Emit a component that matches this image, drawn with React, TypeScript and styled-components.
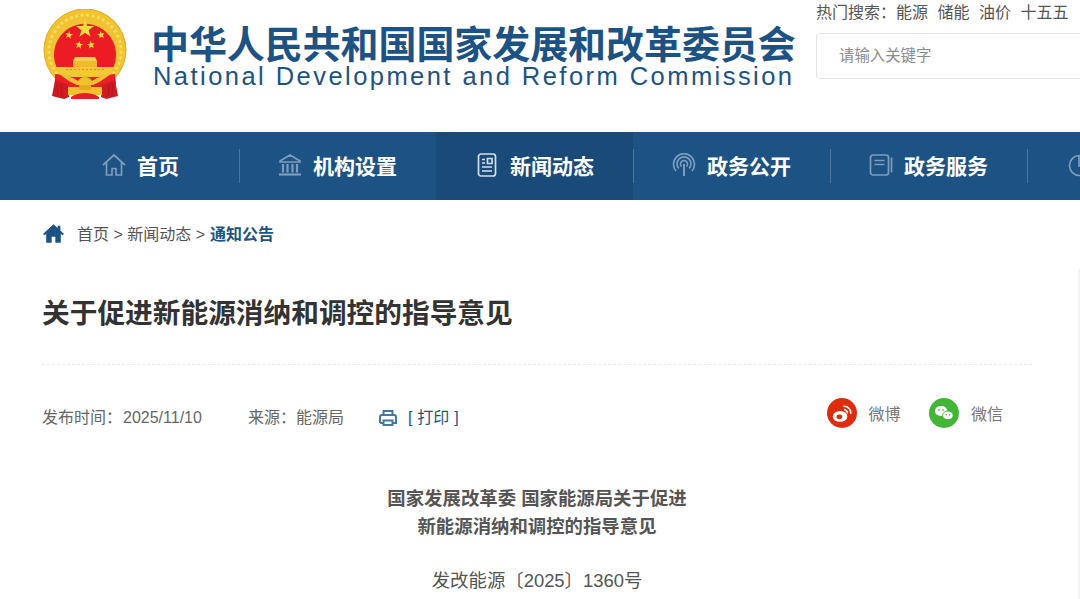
import { FC } from 'react';
import styled, { createGlobalStyle } from 'styled-components';

const GlobalStyle = createGlobalStyle`
    html, body {
        margin: 0;
        padding: 0;
        background: #fff;
        overflow: hidden;
    }
    body {
        font-family: "Liberation Sans", "Noto Sans CJK SC", sans-serif;
    }
`;

const Page = styled.div`
    position: relative;
    width: 1080px;
    height: 599px;
    overflow: hidden;
    color: #555;
`;

const Header = styled.header`
    display: flex;
    height: 132px;
    padding-left: 42px;
`;

const Brand = styled.div`
    display: flex;
    width: 774px;
    flex-shrink: 0;
    padding-top: 9px;
`;

const Emblem = styled.svg`
    width: 87px;
    height: 91px;
    flex-shrink: 0;
`;

const BrandText = styled.div`
    margin-left: 22px;
    padding-top: 16px;
    color: #1d5384;
    white-space: nowrap;
`;

const BrandCn = styled.div`
    font-size: 38px;
    line-height: 40px;
    font-weight: 700;
    letter-spacing: -0.08px;
`;

const BrandEn = styled.div`
    font-size: 25.5px;
    line-height: 22px;
    letter-spacing: 2.45px;
    margin-left: 2px;
`;

const SearchColumn = styled.div`
    flex: 1;
    min-width: 0;
`;

const HotLine = styled.div`
    display: flex;
    gap: 9.5px;
    height: 33px;
    font-size: 16px;
    line-height: 26px;
    color: #555;
    white-space: nowrap;
`;

const SearchBox = styled.div`
    height: 44px;
    width: 300px;
    border: 1px solid #e6e6e6;
    border-radius: 4px;
    padding-left: 22px;
    font-size: 15.4px;
    line-height: 44px;
    color: #8c8c8c;
`;

const Nav = styled.nav`
    display: flex;
    height: 68px;
    padding-left: 42px;
    background: #1d5384;
`;

const NavItem = styled.div<{ $active?: boolean; $last?: boolean }>`
    position: relative;
    display: flex;
    align-items: center;
    justify-content: ${p => (p.$last ? 'flex-start' : 'center')};
    gap: 11px;
    width: 197px;
    flex-shrink: 0;
    box-sizing: border-box;
    padding-bottom: 2px;
    padding-left: ${p => (p.$last ? '41px' : '0')};
    background: ${p => (p.$active ? '#1a4a78' : 'transparent')};
    color: #fff;
    font-size: 21px;
    font-weight: 700;
    white-space: nowrap;
    &::after {
        content: '';
        position: absolute;
        right: -1px;
        top: 17px;
        height: 34px;
        width: 1px;
        background: #4a769e;
        display: ${p => (p.$last ? 'none' : 'block')};
    }
`;

const NavIcon = styled.svg<{ $active?: boolean }>`
    width: 24px;
    height: 24px;
    flex-shrink: 0;
    fill: none;
    stroke: ${p => (p.$active ? '#d3dfe9' : '#7d9dbb')};
    stroke-width: 1.7;
`;

const Crumbs = styled.div`
    display: flex;
    align-items: center;
    height: 66px;
    padding: 0 0 2px 42px;
    font-size: 16px;
    color: #555;
`;

const CrumbIcon = styled.svg`
    width: 21px;
    height: 19px;
    margin: 0 13px 0 1px;
    fill: #1d5384;
`;

const CrumbCurrent = styled.strong`
    color: #1d5384;
    margin-left: 5px;
`;

const Article = styled.main`
    padding: 0 48px 0 42px;
`;

const Title = styled.h1`
    margin: 0;
    padding: 25px 0 30px;
    font-size: 27.7px;
    line-height: 41px;
    font-weight: 700;
    color: #333;
    border-bottom: 1px dashed #ebebeb;
`;

const Meta = styled.div`
    display: flex;
    align-items: center;
    height: 90px;
    padding-top: 6px;
    font-size: 16px;
    color: #666;
`;

const MetaDate = styled.span`
    margin-left: 1px;
`;

const MetaSource = styled.span`
    margin-left: 46px;
`;

const PrintIcon = styled.svg`
    width: 18px;
    height: 16px;
    margin: 4px 0 0 35px;
    fill: none;
    stroke: #47769f;
    stroke-width: 2;
`;

const PrintLink = styled.span`
    margin-left: 11px;
    color: #1d5384;
    word-spacing: 0.5px;
`;

const Shares = styled.div`
    display: flex;
    align-items: center;
    gap: 29px;
    margin: 0 29px 6px auto;
`;

const Share = styled.div`
    display: flex;
    align-items: center;
    gap: 11.5px;
    color: #777;
`;

const ShareBadge = styled.svg`
    width: 30px;
    height: 30px;
`;

const Body = styled.section`
    padding-top: 24px;
    text-align: center;
    color: #555;
    font-size: 18.4px;
`;

const BodyHeading = styled.div`
    font-weight: 700;
    line-height: 28px;
`;

const DocNumber = styled.div`
    margin-top: 26px;
    line-height: 28px;
`;

// faint edge of the panel that floats in at the window's right side
const SideEdge = styled.div`
    position: absolute;
    right: 0;
    top: 269px;
    bottom: 0;
    width: 2px;
    background: #f3f3f3;
`;

const navItems = [
    {
        label: '首页',
        icon: <path d="M1 12 12 2l11 10M4.500 9.500V22h5.500v-6.500h4V22h5.500V9.500" />,
    },
    {
        label: '机构设置',
        icon: (
            <g>
                <path d="M2 8 12 2l10 6v1H2z" />
                <path d="M5 11v8.500M9.500 11v8.500M14.500 11v8.500M19 11v8.500" strokeWidth="2.200" />
                <path d="M1 21.500h22" strokeWidth="2.200" />
            </g>
        ),
    },
    {
        label: '新闻动态',
        active: true,
        icon: (
            <g>
                <rect x="3.500" y="1" width="17" height="22" rx="2.500" />
                <path d="M12.500 5.500h4.500v5h-4.500zM7 6.500h3M7 10h3M7 14h10M7 18h10" />
            </g>
        ),
    },
    {
        label: '政务公开',
        icon: (
            <g>
                <path d="M12 11v12" strokeWidth="2" />
                <path d="M4 18a10.500 10.500 0 1 1 16 0M6.800 15.500a7 7 0 1 1 10.400 0M9.500 13.500a3.500 3.500 0 1 1 5 0" />
            </g>
        ),
    },
    {
        label: '政务服务',
        icon: (
            <g>
                <rect x="1.500" y="2" width="18" height="20" rx="2.500" />
                <path d="M5.500 7.500h10M5.500 11.500h10M22.500 4.500v15" />
            </g>
        ),
    },
    {
        label: '',
        icon: (
            <g>
                <path d="M11 2.500a10 10 0 1 0 10.500 10.500H11z" />
                <path d="M14 1.500a9 9 0 0 1 8.500 8.500H14z" />
            </g>
        ),
    },
];

const Star: FC<{ x: number; y: number; r: number; rot?: number }> = ({ x, y, r, rot = 0 }) => {
    const pts = Array.from({ length: 10 }, (_, i) => {
        const a = ((-90 + rot + i * 36) * Math.PI) / 180;
        const d = i % 2 ? r * 0.4 : r;
        return `${(x + d * Math.cos(a)).toFixed(2)},${(y + d * Math.sin(a)).toFixed(2)}`;
    }).join(' ');
    return <polygon points={pts} fill="#f9dc3c" />;
};

const NationalEmblem: FC = () => (
    <Emblem viewBox="0 0 87 91">
        <circle cx="43" cy="41" r="41" fill="#f1c232" />
        <circle cx="43" cy="41" r="41" fill="none" stroke="#e3ac22" strokeWidth="1" />
        <circle cx="43" cy="42" r="36" fill="none" stroke="#f8da5c" strokeWidth="3" strokeDasharray="3 2.500" />
        {/* red disc, cut flat by the gate platform */}
        <path d="M14.500 58a31 31 0 1 1 57 0z" fill="#ec1c24" />
        <Star x={43} y={20} r={9.500} />
        <Star x={27} y={26} r={4.200} rot={12} />
        <Star x={59} y={26} r={4.200} rot={-12} />
        <Star x={37} y={36} r={4.200} rot={8} />
        <Star x={49} y={36} r={4.200} rot={-8} />
        {/* gate */}
        <path d="M33 48h20l2 4H31z" fill="#f5cf55" />
        <path d="M31 52h24v6H31z" fill="#f2b92c" />
        <path d="M15 58h56v3l-4 5H19l-4-5z" fill="#f6c736" />
        <path d="M24 60.500h38" stroke="#d9951c" strokeWidth="1" strokeDasharray="2 2" />
        {/* red band with the gold arch */}
        <path d="M13 65c4 0 6 1 9 3h42c3-2 5-3 9-3l1 10-5 6H18l-5-6z" fill="#ea2026" />
        <path d="M20 67c7 0 12 2 16 5 2-3 4-4 7-4s5 1 7 4c4-3 9-5 16-5-5 4-10 7-15 9H35c-5-2-10-5-15-9z" fill="#f2c12e" />
        {/* ribbons */}
        <path d="M13 71l13 5 1 12-5 2-12-3z" fill="#cf1a22" />
        <path d="M73 71l-13 5-1 12 5 2 12-3z" fill="#cf1a22" />
        <path d="M15 75l1 11M19 76l1 12M71 75l-1 11M67 76l-1 12" stroke="#a8151b" strokeWidth="0.800" />
        {/* knot and lower gold */}
        <path d="M26 78h34v8H26z" fill="#f2c12e" />
        <path d="M37 76h12v5H37z" fill="#e8a81f" />
        <path d="M29 90v-2c4-3 9-4 14-4s10 1 14 4v2z" fill="#e42026" />
    </Emblem>
);

export default function App() {
    return (
        <Page>
            <GlobalStyle />
            <Header>
                <Brand>
                    <NationalEmblem />
                    <BrandText>
                        <BrandCn>中华人民共和国国家发展和改革委员会</BrandCn>
                        <BrandEn>National Development and Reform Commission</BrandEn>
                    </BrandText>
                </Brand>
                <SearchColumn>
                    <HotLine>
                        <span>热门搜索：能源</span>
                        <span>储能</span>
                        <span>油价</span>
                        <span>十五五</span>
                    </HotLine>
                    <SearchBox>请输入关键字</SearchBox>
                </SearchColumn>
            </Header>
            <Nav>
                {navItems.map((item, i) => (
                    <NavItem key={i} $active={item.active} $last={i === navItems.length - 1}>
                        <NavIcon viewBox="0 0 24 24" $active={item.active}>
                            {item.icon}
                        </NavIcon>
                        {item.label}
                    </NavItem>
                ))}
            </Nav>
            <Crumbs>
                <CrumbIcon viewBox="0 0 23 20">
                    <path d="M11.500 0 0 10.500l1.500 1.500L3.500 10.300V20h6v-6.500h4V20h6v-9.700L21.500 12 23 10.500l-4-3.700V1.500h-3v2.600z" />
                </CrumbIcon>
                首页 &gt; 新闻动态 &gt;
                <CrumbCurrent>通知公告</CrumbCurrent>
            </Crumbs>
            <Article>
                <Title>关于促进新能源消纳和调控的指导意见</Title>
                <Meta>
                    <span>
                        发布时间：<MetaDate>2025/11/10</MetaDate>
                    </span>
                    <MetaSource>来源：能源局</MetaSource>
                    <PrintIcon viewBox="0 0 18 16">
                        <path d="M4.500 5V1h9v4M1 13V7a2 2 0 0 1 2-2h12a2 2 0 0 1 2 2v6h-3.500M4.500 13H1M4.500 10.500h9V15h-9z" />
                    </PrintIcon>
                    <PrintLink>[ 打印 ]</PrintLink>
                    <Shares>
                        <Share>
                            <ShareBadge viewBox="0 0 31 31">
                                <circle cx="15.500" cy="15.500" r="15.500" fill="#e12b0f" />
                                <ellipse cx="13.500" cy="19" rx="7.500" ry="5.500" fill="#fff" />
                                <ellipse cx="12.800" cy="19.500" rx="3" ry="2.500" fill="#e12b0f" />
                                <path d="M17 8.500a7 7 0 0 1 7.500 8M17.500 12a3.500 3.500 0 0 1 3.500 4" fill="none" stroke="#fff" strokeWidth="1.600" />
                            </ShareBadge>
                            微博
                        </Share>
                        <Share>
                            <ShareBadge viewBox="0 0 31 31">
                                <circle cx="15.500" cy="15.500" r="15.500" fill="#43b637" />
                                <ellipse cx="12.500" cy="13.500" rx="6.500" ry="5.200" fill="#fff" />
                                <ellipse cx="19.500" cy="18" rx="5.500" ry="4.500" fill="#fff" stroke="#43b637" />
                                <circle cx="10.300" cy="12.300" r="0.900" fill="#43b637" />
                                <circle cx="14.500" cy="12.300" r="0.900" fill="#43b637" />
                                <circle cx="17.800" cy="17.300" r="0.800" fill="#43b637" />
                                <circle cx="21.300" cy="17.300" r="0.800" fill="#43b637" />
                            </ShareBadge>
                            微信
                        </Share>
                    </Shares>
                </Meta>
                <Body>
                    <BodyHeading>国家发展改革委 国家能源局关于促进</BodyHeading>
                    <BodyHeading>新能源消纳和调控的指导意见</BodyHeading>
                    <DocNumber>发改能源〔2025〕1360号</DocNumber>
                </Body>
            </Article>
            <SideEdge />
        </Page>
    );
}
